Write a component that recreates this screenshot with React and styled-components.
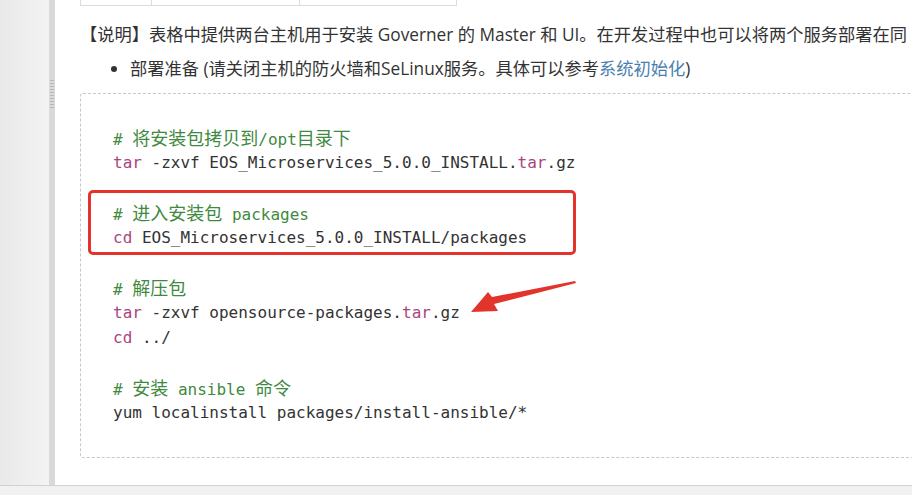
import React from "react";
import styled, { createGlobalStyle } from "styled-components";

const Global = createGlobalStyle`
  html, body { margin: 0; padding: 0; background: #fff; }
  body { overflow: hidden; }
`;

const Page = styled.div`
  width: 912px;
  height: 495px;
  display: flex;
  flex-direction: column;
  overflow: hidden;
`;

const Main = styled.div`
  flex: 1;
  display: flex;
  min-height: 0;
`;

const Gutter = styled.div`
  width: 49px;
  background: linear-gradient(to right, #e9e9e9, #f3f3f3);
`;

const Splitter = styled.div`
  width: 6px;
  background: #d9d9d9;
  position: relative;
`;

const Grip = styled.div`
  position: absolute;
  left: 1px;
  top: 80px;
  width: 4px;
  height: 28px;
  background-image: repeating-linear-gradient(to bottom, #b8b8b8 0 1px, transparent 1px 3px);
`;

const Content = styled.div`
  flex: 1;
  min-width: 0;
  background: #fff;
  padding-left: 25px;
  overflow: hidden;
  color: #333;
  font-family: "Open Sans", "Noto Sans CJK SC", sans-serif;
  font-size: 17.25px;
`;

const TableTail = styled.div`
  display: flex;
  width: 377px;
  height: 5px;
  border-bottom: 1px solid #dcdcdc;
`;

const Cell = styled.div`
  width: ${(p) => p.$w}px;
  border-left: 1px solid #dcdcdc;
  &:last-child { border-right: 1px solid #dcdcdc; }
`;

const Para = styled.p`
  margin: 0;
  white-space: nowrap;
  line-height: 24px;
  padding-top: 17px;
`;

const List = styled.ul`
  margin: 10px 0 0 0;
  padding-left: 50px;
  line-height: 24px;
  white-space: nowrap;
`;

const Link = styled.a`
  color: #4a7eae;
  text-decoration: none;
`;

const CodeBlock = styled.pre`
  position: relative;
  margin: 12px 0 0 0;
  width: 900px;
  border: 1px dashed #c8c8c8;
  border-right: none;
  border-radius: 3px 0 0 3px;
  padding: 31px 0 32px 32px;
  font-family: "DejaVu Sans Mono", "Noto Sans CJK SC", monospace;
  font-size: 16px;
  line-height: 25px;
  color: #333;
`;

const Line = styled.div`
  height: 25px;
  white-space: pre;
`;

const Comment = styled.span`
  color: #3f8a3f;
`;

const Cjk = styled.span`
  font-family: "Noto Sans CJK SC", sans-serif;
  font-size: 18px;
`;

const Kw = styled.span`
  color: #a8447f;
`;

const Highlight = styled.div`
  position: absolute;
  left: 7px;
  top: 96px;
  width: 482px;
  height: 59px;
  border: 3.5px solid #e3342b;
  border-radius: 5px;
`;

const Arrow = styled.svg`
  position: absolute;
  left: 390px;
  top: 186px;
`;

const BottomBar = styled.div`
  height: 9px;
  background: #f1f1f1;
  border-top: 1px solid #d2d2d2;
`;

export default function App() {
  return (
    <>
      <Global />
      <Page>
        <Main>
          <Gutter />
          <Splitter>
            <Grip />
          </Splitter>
          <Content>
            <TableTail>
              <Cell $w={71} />
              <Cell $w={148} />
              <Cell $w={158} />
            </TableTail>
            <Para>
              【说明】表格中提供两台主机用于安装 Governer 的 Master 和 UI。在开发过程中也可以将两个服务部署在同
            </Para>
            <List>
              <li>
                部署准备 (请关闭主机的防火墙和SeLinux服务。具体可以参考<Link>系统初始化</Link>)
              </li>
            </List>
            <CodeBlock>
              <Line><Comment># <Cjk>将安装包拷贝到</Cjk>/opt<Cjk>目录下</Cjk></Comment></Line>
              <Line><Kw>tar</Kw> -zxvf EOS_Microservices_5.0.0_INSTALL.<Kw>tar</Kw>.gz</Line>
              <Line> </Line>
              <Line><Comment># <Cjk>进入安装包</Cjk> packages</Comment></Line>
              <Line><Kw>cd</Kw> EOS_Microservices_5.0.0_INSTALL/packages</Line>
              <Line> </Line>
              <Line><Comment># <Cjk>解压包</Cjk></Comment></Line>
              <Line><Kw>tar</Kw> -zxvf opensource-packages.<Kw>tar</Kw>.gz</Line>
              <Line><Kw>cd</Kw> ../</Line>
              <Line> </Line>
              <Line><Comment># <Cjk>安装</Cjk> ansible <Cjk>命令</Cjk></Comment></Line>
              <Line>yum localinstall packages/install-ansible/*</Line>
              <Highlight />
              <Arrow width="120" height="40" viewBox="0 0 120 40">
                <polygon
                  points="189,3 188,1 105,17 101,12 84,32 111,31 107,24"
                  transform="translate(-84,0)"
                  fill="#e3342b"
                />
              </Arrow>
            </CodeBlock>
          </Content>
        </Main>
        <BottomBar />
      </Page>
    </>
  );
}
